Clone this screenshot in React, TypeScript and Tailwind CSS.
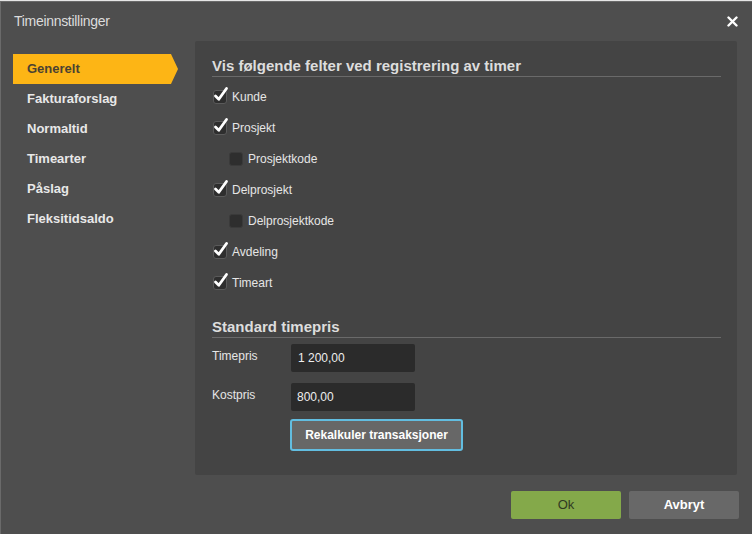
import React from "react";

const font = { fontFamily: '"Liberation Sans", Arial, sans-serif' };

function Check({ checked, label, indent }: { checked: boolean; label: string; indent?: boolean }) {
  return (
    <div className={`flex items-center h-[31px] ${indent ? "pl-[17px]" : "pl-px"}`}>
      <div
        className={`relative w-[14px] h-[14px] rounded-[3px] bg-[#2e2e2e] border shrink-0 ${
          checked ? "border-[#5a5a5a]" : "border-[#3a3a3a]"
        }`}
      >
        {checked && (
          <svg className="absolute left-[-1px] top-[-5px]" width="16" height="17" viewBox="0 0 16 17">
            <path d="M2.5 10 L5.8 13.2 L13.5 2.5" fill="none" stroke="#fff" strokeWidth="2.8" strokeLinecap="round" strokeLinejoin="round" />
          </svg>
        )}
      </div>
      <span className="ml-[5px] text-[12px] text-[#e6e6e6]">{label}</span>
    </div>
  );
}

export default function App() {
  const nav = ["Fakturaforslag", "Normaltid", "Timearter", "Påslag", "Fleksitidsaldo"];
  return (
    <div className="w-[752px] h-[534px] bg-[#e6e6e6] pt-px overflow-hidden" style={font}>
      <div className="h-[533px] bg-[#4e4e4e] border-t border-l border-[#6a6a6a] flex flex-col">
        {/* title bar */}
        <div className="h-[39px] flex items-center justify-between pl-[13px] pr-[14px] shrink-0">
          <span className="text-[14px] text-[#dcdcdc] tracking-[-0.3px]">Timeinnstillinger</span>
          <svg width="11" height="11" viewBox="0 0 11 11">
            <path d="M1.5 1.5 L9.5 9.5 M9.5 1.5 L1.5 9.5" stroke="#fff" strokeWidth="2.4" strokeLinecap="round" />
          </svg>
        </div>
        <div className="flex flex-1 min-h-0">
          {/* side navigation */}
          <div className="w-[194px] shrink-0 pl-[12px] pt-[13px]">
            <div className="relative w-[158px] h-[30px] bg-[#fdb515] flex items-center pl-[14px]">
              <span className="text-[13px] font-bold text-[#4b4232]">Generelt</span>
              <div className="absolute right-[-7px] top-0 w-0 h-0 border-t-[15px] border-b-[15px] border-l-[7px] border-t-transparent border-b-transparent border-l-[#fdb515]" />
            </div>
            {nav.map((n) => (
              <div key={n} className="h-[30px] flex items-center pl-[14px] text-[13px] font-bold text-[#e8e8e8]">
                {n}
              </div>
            ))}
          </div>
          {/* settings panel */}
          <div className="flex flex-col">
            <div className="w-[542px] h-[434px] bg-[#444444] rounded-[2px] pl-[17px] pr-[16px] pt-[16px]">
              <div className="text-[15px] font-bold text-[#dddddd] border-b border-[#6a6a6a] pb-[1px] leading-[18px]">
                Vis følgende felter ved registrering av timer
              </div>
              <div className="pt-[4px]">
                <Check checked label="Kunde" />
                <Check checked label="Prosjekt" />
                <Check checked={false} label="Prosjektkode" indent />
                <Check checked label="Delprosjekt" />
                <Check checked={false} label="Delprosjektkode" indent />
                <Check checked label="Avdeling" />
                <Check checked label="Timeart" />
              </div>
              <div className="mt-[20px] text-[15px] font-bold text-[#dddddd] border-b border-[#6a6a6a] pb-[1px] leading-[18px]">
                Standard timepris
              </div>
              <div className="mt-[6px] flex items-center h-[28px]">
                <span className="w-[79px] text-[12px] text-[#e6e6e6] -mt-[4px]">Timepris</span>
                <div className="w-[124px] h-[28px] bg-[#2b2b2b] rounded-[2px] flex items-center pl-[7px] text-[12px] text-[#eeeeee]">1 200,00</div>
              </div>
              <div className="mt-[11px] flex items-center h-[28px]">
                <span className="w-[79px] text-[12px] text-[#e6e6e6] -mt-[4px]">Kostpris</span>
                <div className="w-[124px] h-[28px] bg-[#2b2b2b] rounded-[2px] flex items-center pl-[6px] text-[12px] text-[#eeeeee]">800,00</div>
              </div>
              <div className="mt-[8px] pl-[78px]">
                <div className="w-[173px] h-[32px] bg-[#676767] border-2 border-[#62bde0] rounded-[3px] flex items-center justify-center text-[12px] font-bold text-white">
                  Rekalkuler transaksjoner
                </div>
              </div>
            </div>
          </div>
        </div>
        {/* footer buttons */}
        <div className="h-[58px] shrink-0 flex items-start justify-end gap-[8px] pr-[13px] pt-[15px]">
          <div className="w-[110px] h-[28px] bg-[#84a94a] rounded-[2px] flex items-center justify-center text-[13px] text-[#303a22]">Ok</div>
          <div className="w-[110px] h-[28px] bg-[#686868] rounded-[2px] flex items-center justify-center text-[13px] font-bold text-white">Avbryt</div>
        </div>
      </div>
    </div>
  );
}
